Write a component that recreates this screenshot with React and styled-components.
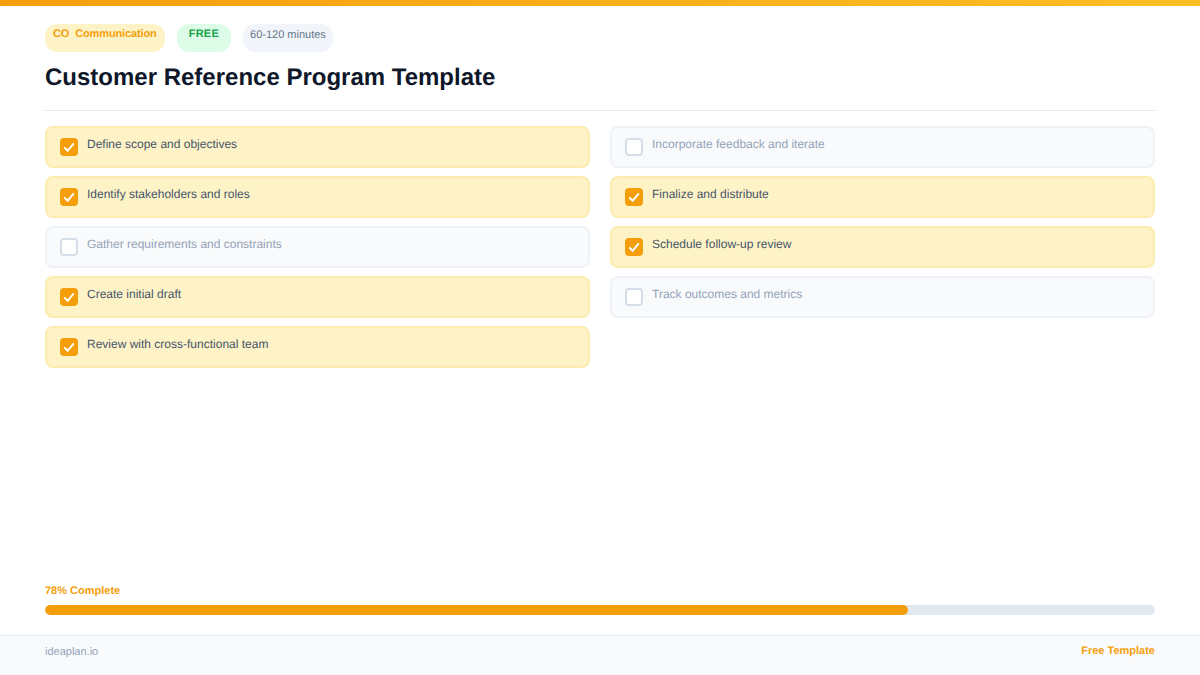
import styled, { createGlobalStyle } from "styled-components";

const GlobalStyle = createGlobalStyle`
  html, body {
    margin: 0;
    padding: 0;
    background: #fff;
  }
  * {
    box-sizing: border-box;
  }
`;

const Page = styled.div`
  width: 1200px;
  height: 675px;
  display: flex;
  flex-direction: column;
  overflow: hidden;
  font-family: "Liberation Sans", Arial, sans-serif;
  text-rendering: geometricPrecision;
`;

const TopBar = styled.div`
  height: 6px;
  flex-shrink: 0;
  background: linear-gradient(90deg, #f59e0b, #fbbf24);
`;

const Main = styled.main`
  flex: 1;
  display: flex;
  flex-direction: column;
  padding: 18px 45px 20px;
`;

const Badges = styled.div`
  display: flex;
  gap: 12px;
  height: 28px;
`;

const Badge = styled.span`
  height: 28px;
  padding: ${(p) => p.$pad};
  border-radius: 12px;
  background: ${(p) => p.$bg};
  color: ${(p) => p.$color};
  font-size: 11px;
  line-height: 13px;
  font-weight: ${(p) => (p.$bold ? 700 : 400)};
  letter-spacing: ${(p) => p.$spacing || "0"};
  white-space: pre;
`;

const Title = styled.h1`
  margin: 10px 0 0;
  height: 32px;
  color: #0f172a;
  font-size: 24px;
  line-height: 32px;
  font-weight: 700;
`;

const Divider = styled.div`
  height: 1px;
  margin: 16px 0 15px;
  background: #e2e8f0;
`;

const Columns = styled.div`
  flex: 1;
  display: grid;
  grid-template-columns: 1fr 1fr;
  column-gap: 20px;
  align-items: start;
`;

const Column = styled.div`
  display: flex;
  flex-direction: column;
  gap: 8px;
`;

const Item = styled.div`
  height: 42px;
  display: flex;
  align-items: flex-start;
  gap: 9px;
  padding: 10px 13px;
  border-radius: 8px;
  border: 2px solid ${(p) => (p.$done ? "#fdebb0" : "#eef2f7")};
  background: ${(p) => (p.$done ? "#fef3c7" : "#f8fafc")};
`;

const Box = styled.span`
  width: 18px;
  height: 18px;
  flex-shrink: 0;
  display: flex;
  align-items: center;
  justify-content: center;
  border-radius: 4px;
  border: 2px solid ${(p) => (p.$done ? "#f59e0b" : "#d5dde8")};
  background: ${(p) => (p.$done ? "#f59e0b" : "#fff")};
`;

const Label = styled.span`
  margin-top: -1px;
  color: ${(p) => (p.$done ? "#475569" : "#94a3b8")};
  font-size: 12px;
  line-height: 14px;
`;

const Progress = styled.div`
  display: flex;
  flex-direction: column;
`;

const ProgressLabel = styled.div`
  height: 14px;
  margin-bottom: 7px;
  color: #f59e0b;
  font-size: 11px;
  line-height: 14px;
  font-weight: 700;
`;

const Track = styled.div`
  height: 10px;
  border-radius: 5px;
  background: #e2e8f0;
  overflow: hidden;
`;

const Fill = styled.div`
  height: 100%;
  border-radius: 5px;
  background: #f59e0b;
`;

const Footer = styled.footer`
  height: 40px;
  flex-shrink: 0;
  display: flex;
  justify-content: space-between;
  align-items: flex-start;
  padding: 8px 45px 0;
  border-top: 1px solid #e2e8f0;
  background: #f8fafc;
`;

const Site = styled.span`
  margin-top: 1px;
  color: #94a3b8;
  font-size: 11px;
  line-height: 14px;
`;

const FooterTag = styled.span`
  color: #f59e0b;
  font-size: 11px;
  line-height: 14px;
  font-weight: 700;
`;

const left = [
  ["Define scope and objectives", true],
  ["Identify stakeholders and roles", true],
  ["Gather requirements and constraints", false],
  ["Create initial draft", true],
  ["Review with cross-functional team", true],
];

const right = [
  ["Incorporate feedback and iterate", false],
  ["Finalize and distribute", true],
  ["Schedule follow-up review", true],
  ["Track outcomes and metrics", false],
];

const progress = 77.78;

const Check = () => (
  <svg width="12" height="12" viewBox="0 0 12 12" fill="none">
    <path d="M1.2 6.4 4.6 9.8 10.8 2.4" stroke="#fff" strokeWidth="2" />
  </svg>
);

const Row = ({ text, done }) => (
  <Item $done={done}>
    <Box $done={done}>{done && <Check />}</Box>
    <Label $done={done}>{text}</Label>
  </Item>
);

const renderColumn = (items) => (
  <Column>
    {items.map(([text, done]) => (
      <Row key={text} text={text} done={done} />
    ))}
  </Column>
);

export default function App() {
  return (
    <>
      <GlobalStyle />
      <Page>
        <TopBar />
        <Main>
          <Badges>
            <Badge $bold $pad="4px 8px" $spacing="-0.12px" $bg="#fef3c7" $color="#f59e0b">
              CO  Communication
            </Badge>
            <Badge $bold $pad="4px 12px" $spacing="0.25px" $bg="#dcfce7" $color="#16a34a">
              FREE
            </Badge>
            <Badge $pad="5px 7px" $bg="#f1f5f9" $color="#64748b">
              60-120 minutes
            </Badge>
          </Badges>
          <Title>Customer Reference Program Template</Title>
          <Divider />
          <Columns>
            {renderColumn(left)}
            {renderColumn(right)}
          </Columns>
          <Progress>
            <ProgressLabel>78% Complete</ProgressLabel>
            <Track>
              <Fill style={{ width: `${progress}%` }} />
            </Track>
          </Progress>
        </Main>
        <Footer>
          <Site>ideaplan.io</Site>
          <FooterTag>Free Template</FooterTag>
        </Footer>
      </Page>
    </>
  );
}
